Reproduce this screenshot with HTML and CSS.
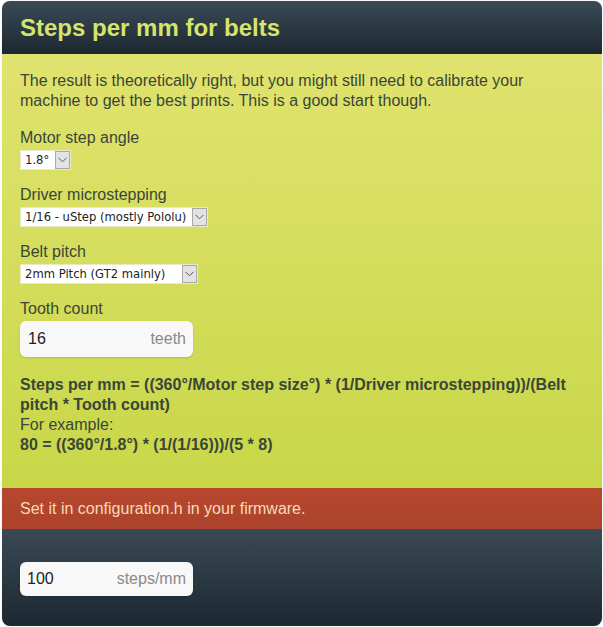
FILE: index.html
```html
<!DOCTYPE html>
<html>
<head>
<meta charset="utf-8">
<link rel="stylesheet" href="styles.css">
</head>
<body>
<div class="card">
  <div class="card-head"><h1 class="title">Steps per mm for belts</h1></div>
  <div class="card-body">
    <p class="intro">The result is theoretically right, but you might still need to calibrate your machine to get the best prints. This is a good start though.</p>
    <div class="field">
      <label class="label">Motor step angle</label>
      <span class="select-wrap"><select class="select"><option>1.8°</option></select><span class="arrow"><svg width="9" height="6" viewBox="0 0 9 6"><path d="M0.5 0.8 L4.5 4.8 L8.5 0.8" fill="none" stroke="#555" stroke-width="1"/></svg></span></span>
    </div>
    <div class="field">
      <label class="label">Driver microstepping</label>
      <span class="select-wrap"><select class="select"><option>1/16 - uStep (mostly Pololu)</option></select><span class="arrow"><svg width="9" height="6" viewBox="0 0 9 6"><path d="M0.5 0.8 L4.5 4.8 L8.5 0.8" fill="none" stroke="#555" stroke-width="1"/></svg></span></span>
    </div>
    <div class="field">
      <label class="label">Belt pitch</label>
      <span class="select-wrap wide"><select class="select"><option>2mm Pitch (GT2 mainly)</option></select><span class="arrow"><svg width="9" height="6" viewBox="0 0 9 6"><path d="M0.5 0.8 L4.5 4.8 L8.5 0.8" fill="none" stroke="#555" stroke-width="1"/></svg></span></span>
    </div>
    <div class="field">
      <label class="label">Tooth count</label>
      <div class="input tall"><span class="value">16</span><span class="unit">teeth</span></div>
    </div>
    <div class="formula">
      <p class="bold">Steps per mm = ((360°/Motor step size°) * (1/Driver microstepping))/(Belt pitch * Tooth count)</p>
      <p>For example:</p>
      <p class="bold">80 = ((360°/1.8°) * (1/(1/16)))/(5 * 8)</p>
    </div>
  </div>
  <div class="card-note">Set it in configuration.h in your firmware.</div>
  <div class="card-foot">
    <div class="input"><span class="value">100</span><span class="unit">steps/mm</span></div>
  </div>
</div>
</body>
</html>
```

FILE: styles.css
```css
html, body { margin: 0; padding: 0; background: #fff; }
body { font-family: "Liberation Sans", Arial, sans-serif; }
.card {
  margin: 1px 1px 1px 2px;
  width: 600px;
  height: 625px;
  border-radius: 8px;
  overflow: hidden;
  display: flex;
  flex-direction: column;
  box-shadow: 0 0 1px rgba(0,0,0,0.3);
}
.card-head {
  height: 53px;
  background: linear-gradient(#3a4a55, #1c2831);
  padding-left: 18px;
  display: flex;
  align-items: center;
}
.title {
  margin: 0;
  font-size: 24px;
  font-weight: bold;
  color: #d6e46c;
  line-height: 53px;
}
.card-body {
  height: 434px;
  box-sizing: border-box;
  padding: 17px 18px 0 18px;
  background: linear-gradient(#e0e36f, #c8d748);
  color: #3a4638;
  font-size: 16px;
  line-height: 20px;
}
.intro { margin: 0 0 17px 0; }
.field { margin-bottom: 15px; }
.label { display: block; height: 20px; margin-bottom: 2px; }
.select-wrap {
  position: relative;
  display: flex;
  width: max-content;
  height: 20px;
}
.select {
  -webkit-appearance: none;
  appearance: none;
  height: 20px;
  box-sizing: border-box;
  border: 1px solid #e8eac6;
  border-radius: 0;
  background: #fff;
  font-family: "DejaVu Sans", Verdana, sans-serif;
  font-size: 11.6px;
  color: #222;
  padding: 0 20px 0 4px;
  margin: 0;
  display: block;
}
.select-wrap.wide .select { width: 178px; }
.arrow {
  position: absolute;
  right: 1px;
  top: 1px;
  width: 15px;
  height: 18px;
  border: 1px solid #a9a9a9;
  background: #e3e3e3;
  display: flex;
  align-items: center;
  justify-content: center;
  box-sizing: border-box;
}
.input {
  width: 173px;
  height: 34px;
  box-sizing: border-box;
  background: #f8f8f8;
  border-radius: 6px;
  display: flex;
  align-items: center;
  justify-content: space-between;
  padding: 0 7px 0 7px;
  font-size: 16px;
  box-shadow: 0 1px 2px rgba(0,0,0,0.15);
}
.input.tall { height: 36px; padding-left: 8px; }
.value { color: #222; }
.unit { color: #8a8a8a; }
.formula { margin-top: 18px; }
.formula p { margin: 0; }
.formula .bold { font-weight: bold; }
.card-note {
  height: 41px;
  box-sizing: border-box;
  background: linear-gradient(#b7472e, #ac432c);
  color: #f8dab8;
  font-size: 16px;
  padding-left: 18px;
  display: flex;
  align-items: center;
}
.card-foot {
  flex: 1;
  background: linear-gradient(#3a4a55, #1c2831);
  padding: 33px 18px 0 18px;
}
```
